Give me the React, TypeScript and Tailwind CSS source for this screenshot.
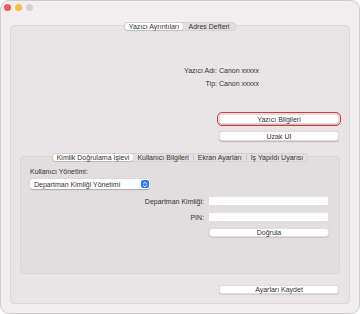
import React from "react";

const font = { fontFamily: '"Liberation Sans", Arial, sans-serif' };

function Btn({ children, className = "" }: { children: React.ReactNode; className?: string }) {
  return (
    <div
      className={
        "flex items-center justify-center bg-white rounded-[3px] shadow-[0_0.5px_1px_rgba(0,0,0,0.2)] border border-[#e0dcde] text-[7px] leading-none text-[#333333] " +
        className
      }
    >
      {children}
    </div>
  );
}

export default function App() {
  return (
    <div
      style={font}
      className="w-[360px] h-[314px] bg-[#f2eef0] rounded-[9px] border border-[#cfcbcd] overflow-hidden flex flex-col text-[#333333]"
    >
      {/* title bar */}
      <div className="flex gap-[4px] pt-[3px] pl-[3px] h-[13px]">
        <div className="w-[7px] h-[7px] rounded-full bg-[#ec5f58]" />
        <div className="w-[7px] h-[7px] rounded-full bg-[#f2bd41]" />
        <div className="w-[7px] h-[7px] rounded-full bg-[#d6d2d4]" />
      </div>

      {/* outer panel */}
      <div className="mt-[11px] mx-[9px] h-[279px] bg-[#e9e5e7] border border-[#dcd8da] rounded-[4px] flex flex-col">
        <div className="flex justify-center -mt-[4px]">
          <div className="flex bg-[#e2dee0] border border-[#d6d2d4] rounded-[3px] text-[7px] leading-none h-[9px]">
            <div className="flex items-center justify-center w-[58px] bg-white rounded-[3px] shadow-[0_0.5px_1px_rgba(0,0,0,0.2)]">
              Yazıcı Ayrıntıları
            </div>
            <div className="flex items-center justify-center w-[52px]">Adres Defteri</div>
          </div>
        </div>

        <div className="mt-[35px] grid grid-cols-[206px_1fr] gap-x-[2px] gap-y-[4px] text-[7px] leading-[9px]">
          <div className="text-right">Yazıcı Adı:</div>
          <div>Canon xxxxx</div>
          <div className="text-right">Tip:</div>
          <div>Canon xxxxx</div>
        </div>

        <div className="mt-[26px] ml-[208px] flex flex-col gap-[7px]">
          <Btn className="w-[120px] h-[10px] outline outline-[1.5px] outline-[#d8343a] outline-offset-[1.5px]">
            Yazıcı Bilgileri
          </Btn>
          <Btn className="w-[120px] h-[10px]">Uzak UI</Btn>
        </div>

        {/* inner panel */}
        <div className="mt-[15px] mx-[9px] h-[118px] bg-[#e2dedf] border border-[#dad6d8] rounded-[4px] flex flex-col">
          <div className="flex justify-center -mt-[4px]">
            <div className="flex items-center bg-[#e3dfe1] border border-[#d6d2d4] rounded-[3px] text-[7px] leading-none h-[9px]">
              <div className="flex items-center h-full px-[4px] bg-white rounded-[3px] shadow-[0_0.5px_1px_rgba(0,0,0,0.2)]">
                Kimlik Doğrulama İşlevi
              </div>
              <div className="px-[4px]">Kullanıcı Bilgileri</div>
              <div className="w-px h-[5px] bg-[#c8c4c6]" />
              <div className="px-[4px]">Ekran Ayarları</div>
              <div className="w-px h-[5px] bg-[#c8c4c6]" />
              <div className="px-[4px]">İş Yapıldı Uyarısı</div>
            </div>
          </div>

          <div className="mt-[5px] ml-[9px] text-[7px] leading-[9px]">Kullanıcı Yönetimi:</div>
          <div className="mt-[3px] ml-[9px] w-[120px] h-[10px] bg-white rounded-[3px] shadow-[0_0.5px_1px_rgba(0,0,0,0.25)] flex items-center justify-between pl-[4px] pr-[1px]">
            <span className="text-[7px] leading-none">Departman Kimliği Yönetimi</span>
            <div className="w-[8px] h-[8px] rounded-[2px] bg-[#2f7cf6] flex items-center justify-center">
              <svg width="6" height="7" viewBox="0 0 6 7" fill="none">
                <path d="M1.5 2.6 L3 1.2 L4.5 2.6" stroke="white" strokeWidth="0.9" strokeLinecap="round" strokeLinejoin="round" />
                <path d="M1.5 4.4 L3 5.8 L4.5 4.4" stroke="white" strokeWidth="0.9" strokeLinecap="round" strokeLinejoin="round" />
              </svg>
            </div>
          </div>

          <div className="mt-[7px] grid grid-cols-[183px_121px] gap-x-[4px] gap-y-[6px] items-center text-[7px] leading-none">
            <div className="text-right">Departman Kimliği:</div>
            <div className="h-[10px] bg-white border border-[#e0dcde]" />
            <div className="text-right">PIN:</div>
            <div className="h-[10px] bg-white border border-[#e0dcde]" />
            <div />
            <Btn className="h-[9px] ml-[1px]">Doğrula</Btn>
          </div>
        </div>

        <div className="mt-[11px] ml-[208px]">
          <Btn className="w-[120px] h-[9px]">Ayarları Kaydet</Btn>
        </div>
      </div>
    </div>
  );
}
